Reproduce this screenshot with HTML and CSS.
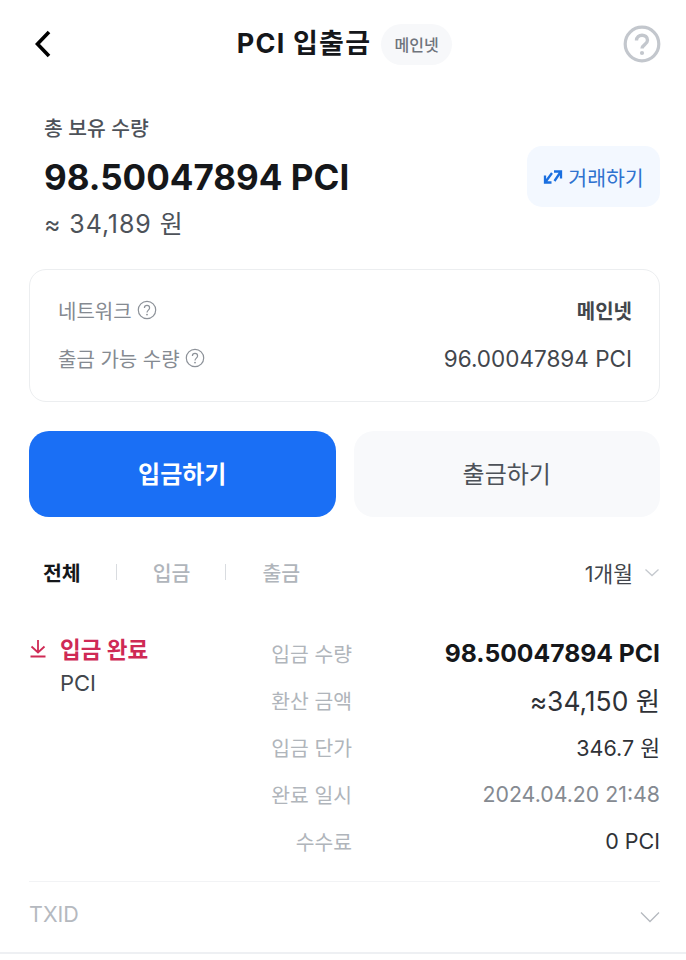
FILE: index.html
```html
<!DOCTYPE html>
<html lang="ko">

<head>
    <meta charset="UTF-8">
    <meta name="viewport" content="width=device-width, initial-scale=1.0">
    <title>PCI 입출금</title>
    <link rel="stylesheet" href="styles.css">
</head>

<body>
    <header class="topbar">
        <svg class="back-icon" width="18" height="28" viewBox="0 0 18 28">
            <path d="M15 2 L3.5 14 L15 26" fill="none" stroke="#000" stroke-width="3.6" />
        </svg>
        <div class="title-wrap">
            <h1 class="title">PCI 입출금</h1>
            <span class="pill">메인넷</span>
        </div>
        <svg class="help-icon" width="38" height="38" viewBox="0 0 38 38">
            <circle cx="19" cy="19" r="16.8" fill="none" stroke="#c3c7cd" stroke-width="3.2" />
            <path d="M13.5 15.5 C13.5 8.5 24.5 8.5 24.5 15.2 C24.5 19.5 19 19.5 19 23.5" fill="none" stroke="#c3c7cd" stroke-width="3.4" />
            <circle cx="19" cy="28" r="2.1" fill="#c3c7cd" />
        </svg>
    </header>

    <section class="holding">
        <div class="holding-text">
            <div class="holding-label">총 보유 수량</div>
            <div class="holding-amount">98.50047894 PCI</div>
            <div class="holding-won">≈ 34,189 원</div>
        </div>
        <a class="trade-btn">
            <svg width="20" height="18" viewBox="0 0 20 18">
                <path d="M2 7.5 L2 14.5 L8.5 14.5 M2.8 13.5 L9 5" fill="none" stroke="#1a6fe0" stroke-width="2.3" />
                <path d="M11 3.5 L18 3.5 L18 10.5 M17.2 4.5 L11.5 13" fill="none" stroke="#1a6fe0" stroke-width="2.3" />
            </svg>
            거래하기
        </a>
    </section>

    <section class="info-card">
        <div class="info-row">
            <span class="info-label">네트워크
                <svg class="q-icon" width="20" height="20" viewBox="0 0 20 20">
                    <circle cx="10" cy="10" r="8.7" fill="none" stroke="#8d9299" stroke-width="1.2" />
                    <path d="M7.4 8 C7.4 4.6 12.6 4.6 12.6 8 C12.6 10 10 10.2 10 12.4" fill="none" stroke="#8d9299" stroke-width="1.2" />
                    <circle cx="10" cy="14.6" r="0.9" fill="#8d9299" />
                </svg>
            </span>
            <strong class="info-strong">메인넷</strong>
        </div>
        <div class="info-row">
            <span class="info-label">출금 가능 수량
                <svg class="q-icon" width="20" height="20" viewBox="0 0 20 20">
                    <circle cx="10" cy="10" r="8.7" fill="none" stroke="#8d9299" stroke-width="1.2" />
                    <path d="M7.4 8 C7.4 4.6 12.6 4.6 12.6 8 C12.6 10 10 10.2 10 12.4" fill="none" stroke="#8d9299" stroke-width="1.2" />
                    <circle cx="10" cy="14.6" r="0.9" fill="#8d9299" />
                </svg>
            </span>
            <span class="info-value">96.00047894 PCI</span>
        </div>
    </section>

    <div class="actions">
        <button class="action action-primary">입금하기</button>
        <button class="action action-plain">출금하기</button>
    </div>

    <nav class="tabs">
        <span class="tab tab-on">전체</span>
        <i class="tab-sep"></i>
        <span class="tab">입금</span>
        <i class="tab-sep"></i>
        <span class="tab">출금</span>
        <span class="period">1개월
            <svg width="16" height="9" viewBox="0 0 16 9">
                <path d="M1.5 1.5 L8 7.5 L14.5 1.5" fill="none" stroke="#c5c9ce" stroke-width="1.3" />
            </svg>
        </span>
    </nav>

    <section class="tx">
        <div class="tx-side">
            <div class="tx-status">
                <svg width="18" height="19" viewBox="0 0 18 19">
                    <path d="M9 1 L9 13 M2.5 7.5 L9 13.5 L15.5 7.5 M1.5 17.5 L16.5 17.5" fill="none" stroke="#cf2a55" stroke-width="1.8" />
                </svg>
                <span>입금 완료</span>
            </div>
            <div class="tx-coin">PCI</div>
        </div>
        <dl class="tx-list">
            <dt>입금 수량</dt>
            <dd class="tx-big">98.50047894 PCI</dd>
            <dt>환산 금액</dt>
            <dd class="tx-won">≈34,150 원</dd>
            <dt>입금 단가</dt>
            <dd>346.7 원</dd>
            <dt>완료 일시</dt>
            <dd class="tx-date">2024.04.20 21:48</dd>
            <dt>수수료</dt>
            <dd>0 PCI</dd>
        </dl>
    </section>

    <div class="txid">
        <span>TXID</span>
        <svg class="txid-arrow" width="20" height="12" viewBox="0 0 20 12">
            <path d="M1 1.5 L10 10.5 L19 1.5" fill="none" stroke="#b5b9bf" stroke-width="1.3" />
        </svg>
    </div>
</body>

</html>
```

FILE: styles.css
```css
* {
    box-sizing: border-box;
}

body {
    font-family: "Inter", "Noto Sans CJK KR", sans-serif;
    background-color: #fff;
    color: #1b1d21;
    margin: 0;
    height: 960px;
    overflow: hidden;
    padding: 0 26px 0 29px;
}

.topbar {
    display: flex;
    align-items: center;
    justify-content: space-between;
    height: 88px;
    padding-left: 5px;
}

.title-wrap {
    display: flex;
    align-items: center;
    gap: 10px;
    margin-left: 14px;
}

.title {
    margin: 0;
    font-size: 27px;
    line-height: 40px;
    font-weight: 700;
    letter-spacing: 1.2px;
    color: #15171a;
}

.pill {
    display: flex;
    align-items: center;
    justify-content: center;
    width: 71px;
    height: 41px;
    border-radius: 21px;
    background-color: #f7f8fa;
    color: #6f747c;
    font-size: 16px;
    font-weight: 500;
}

.help-icon {
    margin-right: -1px;
}

.holding {
    display: flex;
    justify-content: space-between;
    align-items: center;
    padding-left: 15px;
    height: 181px;
}

.holding-label {
    font-size: 20.4px;
    line-height: 28px;
    font-weight: 500;
    color: #4d5259;
}

.holding-amount {
    margin-top: 12px;
    font-size: 35px;
    line-height: 44px;
    font-weight: 700;
    color: #15171a;
}

.holding-won {
    margin-top: 7px;
    font-size: 25px;
    line-height: 36px;
    letter-spacing: 0.9px;
    color: #4d5259;
}

.trade-btn {
    display: flex;
    align-items: center;
    justify-content: center;
    gap: 5px;
    width: 133px;
    height: 61px;
    margin-top: -4px;
    border-radius: 15px;
    background-color: #f3f8ff;
    color: #2f72cf;
    font-size: 20.5px;
}

.info-card {
    height: 133px;
    padding: 20px 27px 0 28px;
    border: 1px solid #eceef0;
    border-radius: 17px;
}

.info-row {
    display: flex;
    justify-content: space-between;
    align-items: center;
    height: 40px;
    margin-bottom: 8px;
}

.info-label {
    display: flex;
    align-items: center;
    gap: 5px;
    font-size: 20px;
    color: #858a91;
}

.info-strong {
    font-size: 20px;
    font-weight: 700;
    color: #42464c;
}

.info-value {
    font-size: 22.5px;
    color: #42464c;
}

.actions {
    display: flex;
    gap: 18px;
    margin-top: 29px;
}

.action {
    flex: 1;
    height: 86px;
    padding: 0 0 3px;
    border: none;
    border-radius: 20px;
    font-family: inherit;
    font-size: 24px;
}

.action-primary {
    background-color: #1a6ff5;
    color: #fff;
    font-weight: 700;
}

.action-plain {
    background-color: #f8f9fb;
    color: #4d5259;
}

.tabs {
    display: flex;
    align-items: center;
    height: 40px;
    margin-top: 35px;
    padding-left: 14px;
    font-size: 20.5px;
}

.tab {
    color: #b0b5bb;
    font-weight: 500;
}

.tab-on {
    color: #15171a;
    font-weight: 700;
}

.tab-sep {
    width: 1px;
    height: 16px;
    margin: 0 36px 0 35px;
    background-color: #d9dce0;
}

.period {
    display: flex;
    align-items: center;
    gap: 11px;
    margin-left: auto;
    font-size: 21.5px;
    font-weight: 400;
    color: #42464c;
}

.tx {
    display: flex;
    justify-content: space-between;
    margin-top: 37px;
    height: 253px;
    border-bottom: 1px solid #f2f3f5;
}

.tx-side {
    padding-top: 2px;
}

.tx-status {
    display: flex;
    align-items: center;
    gap: 13px;
    height: 34px;
    font-size: 22.5px;
    font-weight: 700;
    color: #cf2a55;
}

.tx-coin {
    margin-top: 3px;
    padding-left: 31px;
    font-size: 22px;
    line-height: 30px;
    color: #42464c;
}

.tx-list {
    display: grid;
    grid-template-columns: auto 308px;
    grid-auto-rows: 47px;
    align-items: center;
    justify-items: end;
    margin: 0;
    width: 389px;
}

.tx-list dt {
    font-size: 20.4px;
    color: #b0b5bb;
}

.tx-list dd {
    margin: 0;
    font-size: 21.5px;
    color: #2f3237;
}

.tx-list .tx-big {
    font-size: 24.7px;
    font-weight: 700;
    color: #15171a;
}

.tx-list .tx-won {
    font-size: 26.4px;
}

.tx-list .tx-date {
    font-size: 21.3px;
    color: #858a91;
}

.txid {
    display: flex;
    justify-content: space-between;
    align-items: center;
    height: 72px;
    border-bottom: 2px solid #eef0f3;
    margin-right: -26px;
    margin-left: -29px;
    padding: 0 26px 6px 29px;
    font-size: 21.5px;
    color: #b5b9bf;
}

.txid-arrow {
    margin-top: 5px;
}
```
